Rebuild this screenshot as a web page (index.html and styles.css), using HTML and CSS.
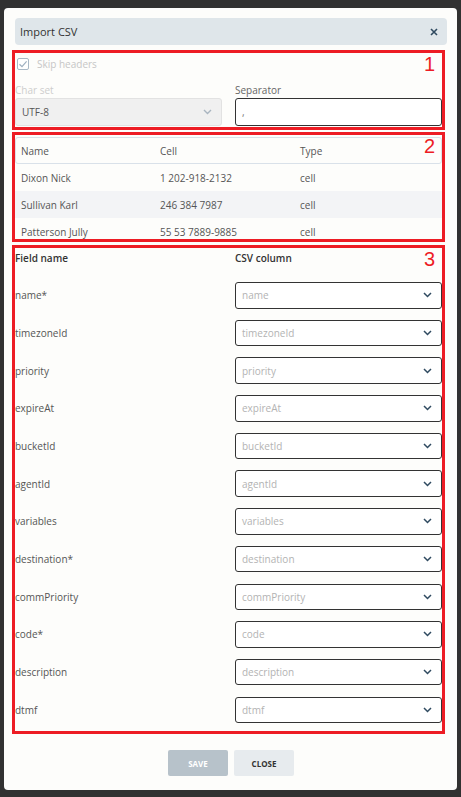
FILE: index.html
```html
<!DOCTYPE html>
<html lang="en">
<head>
  <meta charset="UTF-8">
  <meta name="viewport" content="width=device-width, initial-scale=1.0">
  <title>Import CSV</title>
  <link rel="stylesheet" href="styles.css">
</head>
<body>
  <div class="modal">
    <div class="modal-header">
      <span class="modal-title">Import CSV</span>
      <svg class="close-icon" width="8" height="8" viewBox="0 0 8 8">
        <path d="M1 1 L7 7 M7 1 L1 7" stroke="#2f4a60" stroke-width="1.6" fill="none"/>
      </svg>
    </div>

    <!-- settings -->
    <div class="section section-settings">
      <span class="mark">1</span>
      <label class="check-row">
        <span class="checkbox">
          <svg width="10" height="10" viewBox="0 0 10 10">
            <path d="M1.5 5.2 L4 7.6 L8.6 2.4" stroke="#9fb0c0" stroke-width="1.2" fill="none"/>
          </svg>
        </span>
        <span class="check-label">Skip headers</span>
      </label>
      <div class="settings-grid">
        <div class="field">
          <div class="field-label disabled">Char set</div>
          <div class="control control-disabled">
            <span class="value">UTF-8</span>
            <svg class="chevron" width="9" height="6" viewBox="0 0 9 6">
              <path d="M1 1 L4.5 4.5 L8 1" stroke="#a9b5c0" stroke-width="1.4" fill="none"/>
            </svg>
          </div>
        </div>
        <div class="field">
          <div class="field-label">Separator</div>
          <div class="control control-input">
            <span class="value">,</span>
          </div>
        </div>
      </div>
    </div>

    <!-- preview -->
    <div class="section section-preview">
      <span class="mark">2</span>
      <div class="preview-head">
        <span>Name</span><span>Cell</span><span>Type</span>
      </div>
      <div class="preview-row">
        <span>Dixon Nick</span><span>1 202-918-2132</span><span>cell</span>
      </div>
      <div class="preview-row striped">
        <span>Sullivan Karl</span><span>246 384 7987</span><span>cell</span>
      </div>
      <div class="preview-row">
        <span>Patterson Jully</span><span>55 53 7889-9885</span><span>cell</span>
      </div>
    </div>

    <!-- mapping -->
    <div class="section section-mapping">
      <span class="mark">3</span>
      <div class="mapping-head">
        <span>Field name</span><span>CSV column</span>
      </div>
      <div class="mapping-list" id="mappingList"></div>
    </div>

    <div class="actions">
      <button class="btn btn-save" disabled>SAVE</button>
      <button class="btn btn-close">CLOSE</button>
    </div>
  </div>

  <script>
    const fields = [
      ['name*', 'name'],
      ['timezoneId', 'timezoneId'],
      ['priority', 'priority'],
      ['expireAt', 'expireAt'],
      ['bucketId', 'bucketId'],
      ['agentId', 'agentId'],
      ['variables', 'variables'],
      ['destination*', 'destination'],
      ['commPriority', 'commPriority'],
      ['code*', 'code'],
      ['description', 'description'],
      ['dtmf', 'dtmf']
    ];

    const list = document.getElementById('mappingList');
    fields.forEach(([label, column]) => {
      const row = document.createElement('div');
      row.className = 'mapping-row';
      row.innerHTML =
        `<span class="mapping-label">${label}</span>` +
        `<div class="control control-select">` +
          `<span class="placeholder">${column}</span>` +
          `<svg class="chevron" width="9" height="6" viewBox="0 0 9 6">` +
            `<path d="M1 1 L4.5 4.5 L8 1" stroke="#2f4a60" stroke-width="1.5" fill="none"/>` +
          `</svg>` +
        `</div>`;
      list.appendChild(row);
    });
  </script>
</body>
</html>
```

FILE: styles.css
```css
* {
  box-sizing: border-box;
}

body {
  margin: 0;
  background-color: #313131;
  font-family: "Open Sans", Arial, sans-serif;
  font-size: 10px;
  color: #555;
}

.modal {
  width: 453px;
  height: 782px;
  margin: 8px 0 0 4px;
  padding: 10px 10px 0 11px;
  background-color: #fdfdfb;
  border-radius: 4px;
}

.modal-header {
  display: flex;
  align-items: center;
  justify-content: space-between;
  height: 27px;
  padding: 0 9px 0 5px;
  background-color: #dfe6ea;
  border-radius: 4px;
}

.modal-title {
  font-size: 11px;
  color: #333;
}

.section {
  position: relative;
  width: 433px;
  margin-left: -3px;
  border: 3px solid #ed1c24;
}

.mark {
  position: absolute;
  top: 1px;
  right: 7px;
  font-family: "Liberation Sans", Arial, sans-serif;
  font-size: 20px;
  line-height: 20px;
  color: #ed1c24;
}

/* settings */
.section-settings {
  margin-top: 5px;
  height: 80px;
  padding: 5px 0 0 0;
}

.check-row {
  display: flex;
  align-items: center;
  height: 12px;
  padding-left: 2px;
}

.checkbox {
  display: flex;
  align-items: center;
  justify-content: center;
  width: 12px;
  height: 12px;
  border: 1px solid #a9b8c6;
  border-radius: 2px;
  background-color: #fff;
}

.check-label {
  margin-left: 8px;
  color: #c6c6c6;
}

.settings-grid {
  display: grid;
  grid-template-columns: 207px 207px;
  column-gap: 13px;
  margin-top: 14px;
}

.field-label {
  height: 12px;
  line-height: 12px;
  margin-bottom: 2px;
  color: #666;
}

.field-label.disabled {
  color: #cdcdcd;
}

.control {
  display: flex;
  align-items: center;
  justify-content: space-between;
  height: 28px;
  padding: 0 9px 0 6px;
  border-radius: 3px;
}

.control-disabled {
  background-color: #f0f0f0;
  border: 1px solid #e2e2e2;
  color: #555;
}

.control-input {
  border: 1px solid #333;
  background-color: #fff;
  color: #777;
}

/* preview */
.section-preview {
  margin-top: 2px;
  height: 110px;
  padding-top: 2px;
  overflow: hidden;
}

.preview-head,
.preview-row {
  display: grid;
  grid-template-columns: 140px 140px 1fr;
  align-items: center;
  height: 27px;
}

.preview-head {
  border: 1px solid #d9e1e9;
  border-radius: 3px;
  padding-left: 5px;
}

.preview-head span:nth-child(2),
.preview-head span:nth-child(3) {
  margin-left: -1px;
}

.preview-row {
  padding-left: 6px;
}

.preview-row span:nth-child(2),
.preview-row span:nth-child(3) {
  margin-left: -1px;
}

.preview-row.striped {
  background-color: #f3f4f6;
}

/* mapping */
.section-mapping {
  margin-top: 3px;
  padding: 3px 0 8px 0;
}

.mapping-head {
  display: grid;
  grid-template-columns: 220px 1fr;
  height: 14px;
  line-height: 14px;
  font-weight: 600;
  color: #333;
}

.mapping-list {
  display: flex;
  flex-direction: column;
  gap: 11.2px;
  margin-top: 17px;
}

.mapping-row {
  display: grid;
  grid-template-columns: 220px 207px;
  align-items: center;
}

.mapping-label {
  color: #555;
}

.control-select {
  height: 26.5px;
  border: 1px solid #333;
  background-color: #fff;
}

.placeholder {
  color: #b3b3b3;
}

/* actions */
.actions {
  display: flex;
  justify-content: center;
  gap: 6px;
  margin-top: 16px;
}

.btn {
  width: 60px;
  height: 26px;
  border: none;
  border-radius: 2px;
  font-family: "Open Sans", Arial, sans-serif;
  font-size: 8px;
  font-weight: 700;
}

.btn-save {
  background-color: #b7c2ca;
  color: #fff;
}

.btn-close {
  background-color: #e7ebee;
  color: #333;
  cursor: pointer;
}
```
